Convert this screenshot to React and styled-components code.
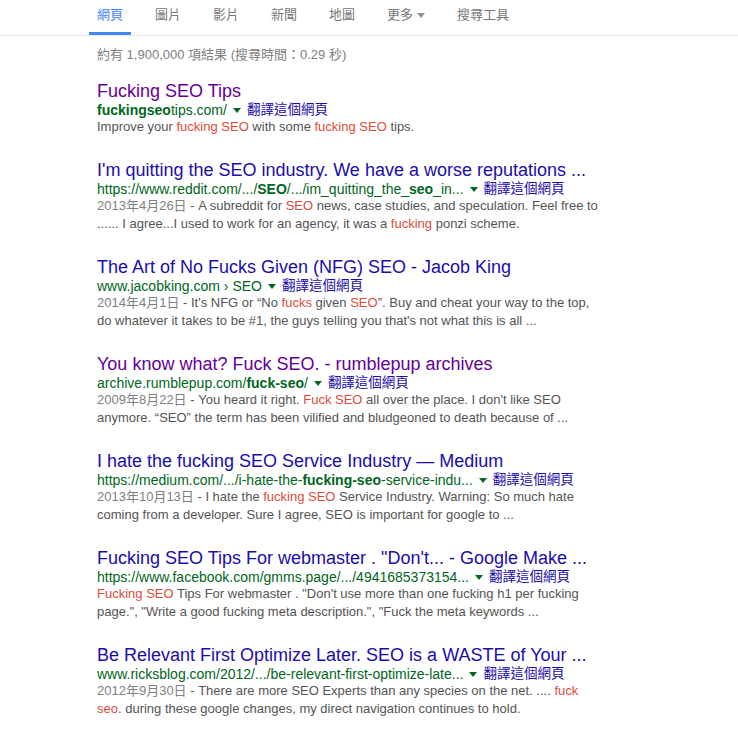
import React from 'react';
import styled, { createGlobalStyle } from 'styled-components';

const GlobalStyle = createGlobalStyle`
  body {
    margin: 0;
    background: #fff;
    font-family: "Liberation Sans", Arial, "Noto Sans CJK TC", sans-serif;
  }
`;

const Page = styled.div`
  width: 738px;
  height: 729px;
  overflow: hidden;
  background: #fff;
`;

const TabBar = styled.div`
  display: flex;
  padding-left: 89px;
  border-bottom: 1px solid #ebebeb;
  height: 35px;
`;

const Tab = styled.div`
  box-sizing: border-box;
  height: 35px;
  padding: 6px 8px 0;
  margin-right: ${p => p.$gap || 16}px;
  font-size: 13px;
  line-height: 18px;
  color: ${p => (p.$active ? '#4285f4' : '#777')};
  border-bottom: 3px solid ${p => (p.$active ? '#4285f4' : 'transparent')};
  display: flex;
  align-items: flex-start;
`;

const TabArrow = styled.span`
  display: inline-block;
  margin: 7px 0 0 4px;
  border-top: 5px solid #909090;
  border-left: 4px solid transparent;
  border-right: 4px solid transparent;
`;

const Content = styled.div`
  padding: 10px 0 0 97px;
`;

const Stats = styled.div`
  font-size: 13px;
  line-height: 18px;
  color: #808080;
  margin-bottom: 16px;
`;

const Result = styled.div`
  margin-bottom: 23px;
`;

const Title = styled.div`
  font-size: 18px;
  line-height: 22px;
  color: ${p => (p.$visited ? '#660099' : '#1a0dab')};
  white-space: nowrap;
`;

const UrlRow = styled.div`
  display: flex;
  align-items: center;
  font-size: 14px;
  line-height: 16px;
  height: 16px;
  white-space: nowrap;
`;

const Url = styled.span`
  color: #006621;

  b {
    font-weight: bold;
  }
`;

const Caret = styled.span`
  display: inline-block;
  margin: 1px 6px 0 6px;
  border-top: 5px solid #006621;
  border-left: 4px solid transparent;
  border-right: 4px solid transparent;
`;

const Translate = styled.span`
  color: #1a0dab;
  font-size: 13.5px;
`;

const Snippet = styled.div`
  font-size: 13px;
  line-height: 18px;
  color: #545454;
  white-space: nowrap;
`;

const DateText = styled.span`
  color: #808080;
`;

const Em = styled.span`
  color: #dd4b39;
`;

const tabs = [
  { label: '網頁', active: true },
  { label: '圖片' },
  { label: '影片' },
  { label: '新聞' },
  { label: '地圖' },
  { label: '更多', arrow: true },
  { label: '搜尋工具' },
];

const results = [
  {
    title: 'Fucking SEO Tips',
    visited: true,
    url: <><b>fuckingseo</b>tips.com/</>,
    lines: [
      <>Improve your <Em>fucking SEO</Em> with some <Em>fucking SEO</Em> tips.</>,
    ],
  },
  {
    title: "I'm quitting the SEO industry. We have a worse reputations ...",
    url: <>https://www.reddit.com/.../<b>SEO</b>/.../im_quitting_the_<b>seo</b>_in...</>,
    lines: [
      <><DateText>2013年4月26日</DateText> - A subreddit for <Em>SEO</Em> news, case studies, and speculation. Feel free to</>,
      <>...... I agree...I used to work for an agency, it was a <Em>fucking</Em> ponzi scheme.</>,
    ],
  },
  {
    title: 'The Art of No Fucks Given (NFG) SEO - Jacob King',
    url: <>www.jacobking.com › SEO</>,
    lines: [
      <><DateText>2014年4月1日</DateText> - It's NFG or “No <Em>fucks</Em> given <Em>SEO</Em>”. Buy and cheat your way to the top,</>,
      <>do whatever it takes to be #1, the guys telling you that's not what this is all ...</>,
    ],
  },
  {
    title: 'You know what? Fuck SEO. - rumblepup archives',
    visited: true,
    url: <>archive.rumblepup.com/<b>fuck-seo</b>/</>,
    lines: [
      <><DateText>2009年8月22日</DateText> - You heard it right. <Em>Fuck SEO</Em> all over the place. I don't like SEO</>,
      <>anymore. “SEO” the term has been vilified and bludgeoned to death because of ...</>,
    ],
  },
  {
    title: 'I hate the fucking SEO Service Industry — Medium',
    url: <>https://medium.com/.../i-hate-the-<b>fucking-seo</b>-service-indu...</>,
    lines: [
      <><DateText>2013年10月13日</DateText> - I hate the <Em>fucking SEO</Em> Service Industry. Warning: So much hate</>,
      <>coming from a developer. Sure I agree, SEO is important for google to ...</>,
    ],
  },
  {
    title: 'Fucking SEO Tips For webmaster . "Don\'t... - Google Make ...',
    url: <>https://www.facebook.com/gmms.page/.../4941685373154...</>,
    lines: [
      <><Em>Fucking SEO</Em> Tips For webmaster . "Don't use more than one fucking h1 per fucking</>,
      <>page.", "Write a good fucking meta description.", "Fuck the meta keywords ...</>,
    ],
  },
  {
    title: 'Be Relevant First Optimize Later. SEO is a WASTE of Your ...',
    url: <>www.ricksblog.com/2012/.../be-relevant-first-optimize-late...</>,
    lines: [
      <><DateText>2012年9月30日</DateText> - There are more SEO Experts than any species on the net. .... <Em>fuck</Em></>,
      <><Em>seo</Em>. during these google changes, my direct navigation continues to hold.</>,
    ],
  },
];

const App = () => {
  return (
    <Page>
      <GlobalStyle />
      <TabBar>
        {tabs.map((t, i) => (
          <Tab key={t.label} $active={t.active} $gap={i === tabs.length - 1 ? 0 : 16}>
            {t.label}
            {t.arrow && <TabArrow />}
          </Tab>
        ))}
      </TabBar>
      <Content>
        <Stats>約有 1,900,000 項結果 (搜尋時間：0.29 秒)</Stats>
        {results.map((r, i) => (
          <Result key={i}>
            <Title $visited={r.visited}>{r.title}</Title>
            <UrlRow>
              <Url>{r.url}</Url>
              <Caret />
              <Translate>翻譯這個網頁</Translate>
            </UrlRow>
            {r.lines.map((line, j) => (
              <Snippet key={j}>{line}</Snippet>
            ))}
          </Result>
        ))}
      </Content>
    </Page>
  );
};

export default App;
